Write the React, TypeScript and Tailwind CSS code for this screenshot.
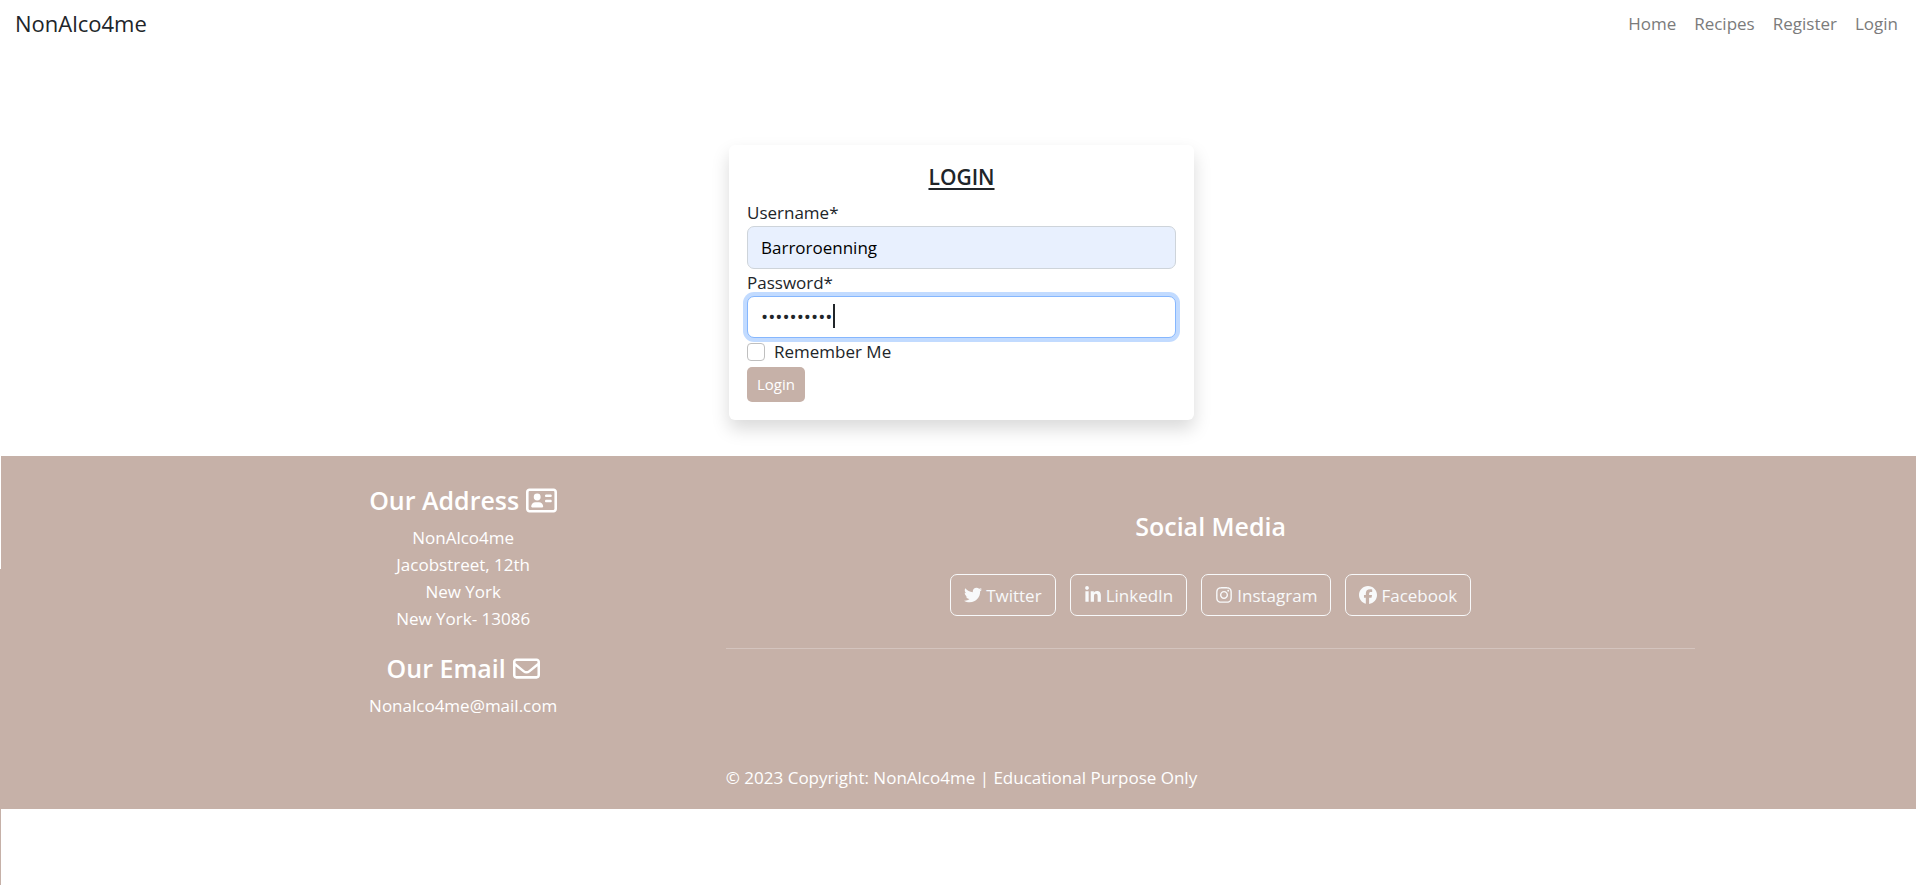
import { FaFacebook, FaInstagram, FaLinkedinIn, FaRegAddressCard, FaRegEnvelope, FaTwitter } from "react-icons/fa6";

const navLinks = ["Home", "Recipes", "Register", "Login"];
const address = ["NonAlco4me", "Jacobstreet, 12th", "New York", "New York- 13086"];
const socials = [
  { name: "Twitter", Icon: FaTwitter },
  { name: "LinkedIn", Icon: FaLinkedinIn },
  { name: "Instagram", Icon: FaInstagram },
  { name: "Facebook", Icon: FaFacebook },
];

function Header() {
  return (
    <header className="flex h-[46px] items-center justify-between pr-[18px] pl-[15px]">
      <a href="#" className="text-[22px]">NonAlco4me</a>
      <nav className="flex gap-[18px] text-[#7b7b7b]">
        {navLinks.map((name) => (
          <a key={name} href="#">{name}</a>
        ))}
      </nav>
    </header>
  );
}

function LoginCard() {
  return (
    <form className="flex w-full max-w-[465px] flex-col rounded-md bg-white p-[18px] shadow-[0_9px_18px_rgba(0,0,0,0.15)]">
      <h1 className="mb-2 text-center text-[21px] leading-7 font-semibold underline decoration-2 underline-offset-3">LOGIN</h1>
      <label htmlFor="username">Username*</label>
      <input id="username" defaultValue="Barroroenning" className="h-[43px] w-full rounded-[7px] border border-[#ced4da] bg-[#e8f0fe] px-[13px] text-black outline-none" />
      <label htmlFor="password">Password*</label>
      <div className="relative">
        <input id="password" type="password" defaultValue="nonalco4me" className="block h-[42px] w-full rounded-[7px] border border-[#86b7fe] bg-white px-[13px] text-[19px] caret-transparent shadow-[0_0_0_4px_#c2dbff] outline-none" />
        <span className="absolute top-2 left-[86px] h-6 w-0.5 bg-[#212529]" />
      </div>
      <div className="mb-0.5 flex items-center gap-[9px]">
        <input id="remember" type="checkbox" className="size-[18px] appearance-none rounded border border-[#bfbfbf] bg-white" />
        <label htmlFor="remember">Remember Me</label>
      </div>
      <button type="button" className="h-[35px] self-start rounded-[5px] bg-[#c6b1a8] px-2.5 text-[15px] text-white">Login</button>
    </form>
  );
}

function Footer() {
  return (
    <footer className="bg-[#c6b1a8] pl-1.5 text-white">
      <div className="mx-auto grid max-w-[1495px] grid-cols-3">
        <div className="px-3.5 pt-7 text-center">
          <h2 className="mb-2 flex items-center justify-center gap-[7px] text-[25px] leading-8 font-semibold">
            Our Address <FaRegAddressCard className="size-[31px]" />
          </h2>
          {address.map((line) => (
            <p key={line}>{line}</p>
          ))}
          <h2 className="mt-5 mb-2 flex items-center justify-center gap-[7px] text-[25px] leading-8 font-semibold">
            Our Email <FaRegEnvelope className="size-[27px]" />
          </h2>
          <p>Nonalco4me@mail.com</p>
        </div>
        <div className="col-span-2 px-3.5 pt-[54px] text-center">
          <h2 className="text-[25px] leading-8 font-semibold">Social Media</h2>
          <div className="mt-8 flex justify-center gap-3.5">
            {socials.map(({ name, Icon }) => (
              <a key={name} href="#" className="flex h-[42px] items-center gap-1 rounded-[7px] border border-[#f8f9fa] px-[13px] text-[#f8f9fa]">
                <Icon className="size-[18px]" />
                {name}
              </a>
            ))}
          </div>
          <hr className="mt-8 border-white/25" />
        </div>
      </div>
      <p className="pt-[45px] pb-[18px] text-center">© 2023 Copyright: NonAlco4me | Educational Purpose Only</p>
    </footer>
  );
}

export default function App() {
  return (
    <div className="flex min-h-screen flex-col bg-white font-['Open_Sans','Noto_Sans',sans-serif] text-[17px] leading-[27px] text-[#212529]">
      <Header />
      <main className="flex justify-center pt-[99px] pb-9 pl-[7px]">
        <LoginCard />
      </main>
      <div className="flex flex-1">
        <div className="mt-[113px] w-px bg-[#c6b1a8]" />
        <div className="flex-1">
          <Footer />
        </div>
      </div>
    </div>
  );
}
